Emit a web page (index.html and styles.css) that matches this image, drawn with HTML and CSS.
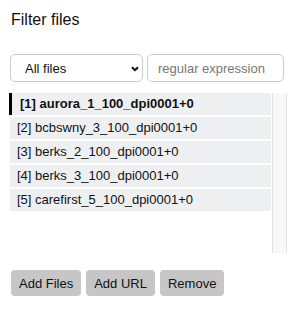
FILE: index.html
```html
<!DOCTYPE html>
<html>
<head>
<title>Filter files</title>
<link rel="stylesheet" href="styles.css">
</head>
<body>

<div class="panel">
  <h3 class="title">Filter files</h3>

  <div class="filter-row">
    <div class="select-wrap">
      <select class="kind">
        <option>All files</option>
      </select>
      <svg class="chevron" width="8" height="6" viewBox="0 0 8 6">
        <path d="M1 1.2 L4 4.2 L7 1.2" fill="none" stroke="#111" stroke-width="2"/>
      </svg>
    </div>
    <input class="regex" type="text" placeholder="regular expression">
  </div>

  <div class="file-box">
    <div class="file-list">
      <div class="file active">[1] aurora_1_100_dpi0001+0</div>
      <div class="file">[2] bcbswny_3_100_dpi0001+0</div>
      <div class="file">[3] berks_2_100_dpi0001+0</div>
      <div class="file">[4] berks_3_100_dpi0001+0</div>
      <div class="file">[5] carefirst_5_100_dpi0001+0</div>
    </div>
    <div class="track"></div>
  </div>

  <div class="buttons">
    <button class="button">Add Files</button>
    <button class="button">Add URL</button>
    <button class="button">Remove</button>
  </div>
</div>

</body>
</html>
```

FILE: styles.css
```css
body {
  margin: 0;
  background: #fff;
  font-family: "Liberation Sans", Arial, sans-serif;
  color: #111;
}

.panel {
  padding: 10px 0 0 10px;
  width: 277px;
}

.title {
  margin: 0 0 0 1px;
  font-size: 16px;
  font-weight: normal;
  line-height: 19px;
}

.filter-row {
  display: flex;
  gap: 4px;
  margin-top: 25px;
}

.select-wrap {
  position: relative;
  width: 133px;
}

.kind {
  appearance: none;
  -webkit-appearance: none;
  width: 133px;
  height: 28px;
  box-sizing: border-box;
  border: 1px solid #cbcbcb;
  border-radius: 5px;
  background: #fff;
  padding: 0 0 0 14px;
  font-family: inherit;
  font-size: 13px;
  color: #111;
  margin: 0;
}

.chevron {
  position: absolute;
  left: 121px;
  top: 12px;
  pointer-events: none;
}

.regex {
  width: 137px;
  height: 28px;
  box-sizing: border-box;
  border: 1px solid #cbcbcb;
  border-radius: 5px;
  padding: 0 0 0 10px;
  font-family: inherit;
  font-size: 13px;
  margin: 0;
}

.regex::placeholder {
  color: #777;
}

.file-box {
  display: flex;
  gap: 1px;
  margin-top: 11px;
  height: 160px;
}

.file-list {
  width: 261px;
}

.file {
  height: 22px;
  line-height: 22px;
  margin-bottom: 2px;
  padding-left: 7px;
  background-color: #eeeff1;
  font-size: 13px;
  white-space: nowrap;
}

.file.active {
  border-left: 3px solid #000;
  margin-left: -1px;
  padding-left: 8px;
  font-weight: bold;
}

.track {
  width: 13px;
  background-color: #f8f8f8;
  border-left: 1px solid #e2e2e2;
  border-right: 1px solid #e2e2e2;
}

.buttons {
  display: flex;
  gap: 5px;
  margin: 17px 0 0 1px;
}

.button {
  background-color: #c6c6c6;
  border: none;
  border-radius: 4px;
  height: 26px;
  padding: 0 8px;
  font-family: inherit;
  font-size: 13px;
  color: #111;
  margin: 0;
}
```
